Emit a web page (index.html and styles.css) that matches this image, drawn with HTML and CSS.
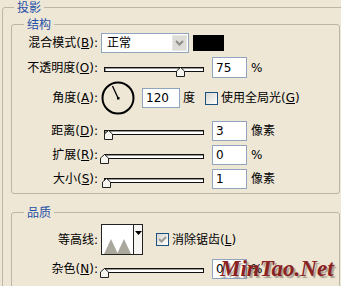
FILE: index.html
```html
<!DOCTYPE html>
<html lang="zh-CN">
<head>
    <meta charset="UTF-8">
    <title>投影</title>
    <link rel="stylesheet" href="styles.css">
</head>
<body>
    <fieldset class="group group-outer">
        <legend>投影</legend>

        <!-- 结构 -->
        <fieldset class="group group-inner">
            <legend>结构</legend>
            <div class="group-body">
                <div class="row row-tall">
                    <span class="label">混合模式(<u>B</u>):</span>
                    <div class="select">
                        <span class="select-text">正常</span>
                        <span class="select-btn">
                            <svg width="9" height="6" viewBox="0 0 9 6"><polyline points="1,1 4.5,4.5 8,1" fill="none" stroke="#8d8c88" stroke-width="2"/></svg>
                        </span>
                    </div>
                    <span class="swatch"></span>
                </div>

                <div class="row row-tall">
                    <span class="label">不透明度(<u>O</u>):</span>
                    <div class="slider">
                        <div class="track"></div>
                        <svg class="thumb" style="left:72px" width="9" height="10" viewBox="0 0 9 10"><polygon points="4.5,0.5 8.5,4 8.5,9.5 0.5,9.5 0.5,4"/></svg>
                    </div>
                    <input class="field" type="text" value="75">
                    <span class="unit">%</span>
                </div>

                <div class="row row-dial">
                    <span class="label">角度(<u>A</u>):</span>
                    <svg class="dial" width="34" height="34" viewBox="0 0 34 34">
                        <circle cx="17" cy="17" r="15.5" fill="none" stroke="#000" stroke-width="2"/>
                        <line x1="17" y1="17" x2="11.5" y2="5" stroke="#000" stroke-width="1.3"/>
                        <rect x="16" y="16" width="2.5" height="2.5" fill="#000"/>
                    </svg>
                    <input class="field field-angle" type="text" value="120">
                    <span class="unit unit-deg">度</span>
                    <span class="check"></span>
                    <span class="check-label">使用全局光(<u>G</u>)</span>
                </div>

                <div class="row">
                    <span class="label">距离(<u>D</u>):</span>
                    <div class="slider">
                        <div class="track"></div>
                        <svg class="thumb" style="left:0px" width="9" height="10" viewBox="0 0 9 10"><polygon points="4.5,0.5 8.5,4 8.5,9.5 0.5,9.5 0.5,4"/></svg>
                    </div>
                    <input class="field" type="text" value="3">
                    <span class="unit">像素</span>
                </div>

                <div class="row">
                    <span class="label">扩展(<u>R</u>):</span>
                    <div class="slider">
                        <div class="track"></div>
                        <svg class="thumb" style="left:-4px" width="9" height="10" viewBox="0 0 9 10"><polygon points="4.5,0.5 8.5,4 8.5,9.5 0.5,9.5 0.5,4"/></svg>
                    </div>
                    <input class="field" type="text" value="0">
                    <span class="unit">%</span>
                </div>

                <div class="row">
                    <span class="label">大小(<u>S</u>):</span>
                    <div class="slider">
                        <div class="track"></div>
                        <svg class="thumb" style="left:-2px" width="9" height="10" viewBox="0 0 9 10"><polygon points="4.5,0.5 8.5,4 8.5,9.5 0.5,9.5 0.5,4"/></svg>
                    </div>
                    <input class="field" type="text" value="1">
                    <span class="unit">像素</span>
                </div>
            </div>
        </fieldset>

        <!-- 品质 -->
        <fieldset class="group group-inner group-quality">
            <legend>品质</legend>
            <div class="group-body">
                <div class="row row-contour">
                    <span class="label">等高线:</span>
                    <div class="contour">
                        <svg class="contour-preview" width="31" height="29" viewBox="0 0 31 29">
                            <polygon points="2,29 9,14 16,29" fill="#aaa79d"/>
                            <polygon points="15,29 22,14 29,29" fill="#aaa79d"/>
                        </svg>
                        <span class="contour-btn">
                            <svg width="7" height="4" viewBox="0 0 7 4"><polygon points="0,0 7,0 3.5,4" fill="#000"/></svg>
                        </span>
                    </div>
                    <span class="check check-on">
                        <svg width="11" height="11" viewBox="0 0 11 11"><polyline points="2,5 4.5,7.5 9,3" fill="none" stroke="#9a9a96" stroke-width="2"/></svg>
                    </span>
                    <span class="check-label">消除锯齿(<u>L</u>)</span>
                </div>

                <div class="row">
                    <span class="label">杂色(<u>N</u>):</span>
                    <div class="slider">
                        <div class="track"></div>
                        <svg class="thumb" style="left:-4px" width="9" height="10" viewBox="0 0 9 10"><polygon points="4.5,0.5 8.5,4 8.5,9.5 0.5,9.5 0.5,4"/></svg>
                    </div>
                    <input class="field" type="text" value="0">
                    <span class="unit">%</span>
                </div>
            </div>
        </fieldset>
    </fieldset>

    <div class="watermark">MinTao.Net</div>
</body>
</html>
```

FILE: styles.css
```css
/* Basic reset */
* {
    box-sizing: border-box;
    margin: 0;
    padding: 0;
}

html,
body {
    overflow: hidden;
}

body {
    position: relative;
    height: 286px;
    background-color: #eee7d6;
    font-family: "DejaVu Sans", "Noto Sans CJK SC", sans-serif;
    font-size: 12px;
    color: #000;
}

/* Group boxes */
.group {
    border: 1px solid #bab6a8;
    border-radius: 3px;
}

.group legend {
    margin-left: 12px;
    padding: 0 3px;
    line-height: 14px;
    font-family: "Noto Sans CJK SC", sans-serif;
    color: #1f4fa8;
}

.group-outer {
    width: 400px;
    margin-left: 2px;
    padding-bottom: 40px;
}

.group-outer > legend {
    margin-left: 11px;
}

.group-inner {
    width: 329px;
    margin: 3px 0 0 8px;
}

.group-body {
    padding: 1px 0 4px;
}

.group-quality {
    margin-top: 11px;
}

.group-quality .group-body {
    padding: 5px 0 20px;
}

/* Rows */
.row {
    display: flex;
    align-items: center;
    height: 20px;
    margin-top: 4px;
    line-height: 14px;
}

.row:first-child {
    margin-top: 0;
}

.row-tall {
    height: 21px;
}

.row.row-dial {
    height: 34px;
    margin-top: 3px;
    margin-bottom: 6px;
}

.row.row-contour {
    height: 31px;
}

.label {
    width: 86px;
    text-align: right;
    white-space: nowrap;
}

/* Blend select */
.select {
    display: flex;
    align-items: center;
    width: 88px;
    height: 20px;
    margin-left: 3px;
    padding: 1px;
    border: 1px solid #8fa5bd;
    background-color: #fff;
}

.select-text {
    flex: 1;
    padding-left: 4px;
}

.select-btn {
    display: flex;
    align-items: center;
    justify-content: center;
    width: 15px;
    height: 16px;
    background-color: #dedcd6;
    border: 1px solid #e9e7e2;
}

.swatch {
    width: 31px;
    height: 16px;
    margin-left: 4px;
    background-color: #000;
}

/* Sliders */
.slider {
    position: relative;
    width: 100px;
    height: 20px;
    margin-left: 6px;
    padding-top: 9px;
}

.track {
    height: 5px;
    border: 1px solid #111;
    background-color: #fff;
    box-shadow: inset 1px 1px 0 #9a978e;
}

.thumb {
    position: absolute;
    top: 9px;
    fill: #f6f4ee;
    stroke: #222;
    stroke-width: 1;
}

/* Number fields */
.field {
    width: 35px;
    height: 21px;
    margin-left: 8px;
    padding: 0 3px;
    border: 1px solid #8fa5bd;
    background-color: #fff;
    font-family: "DejaVu Sans", sans-serif;
    font-size: 12px;
    color: #000;
    outline: none;
}

.row .field {
    height: 20px;
}

.row-tall .field {
    height: 21px;
}

.field-angle {
    width: 38px;
    margin-left: 7px;
}

.unit {
    margin-left: 4px;
}

.unit-deg {
    margin-left: 3px;
}

/* Dial */
.dial {
    margin-left: 3px;
}

/* Checkboxes */
.check {
    display: flex;
    align-items: center;
    justify-content: center;
    width: 13px;
    height: 13px;
    margin-left: 10px;
    border: 1px solid #1c5180;
    background: linear-gradient(135deg, #d8d6cf 0%, #f4f3ef 70%, #fff 100%);
}

.check-label {
    margin-left: 3px;
    white-space: nowrap;
}

.check-on {
    margin-left: 13px;
}

/* Contour picker */
.contour {
    display: flex;
    width: 42px;
    height: 31px;
    margin-left: 3px;
    border: 1px solid #222;
    background-color: #fff;
}

.contour-preview {
    display: block;
    width: 31px;
    height: 29px;
}

.contour-btn {
    display: flex;
    justify-content: center;
    width: 9px;
    padding-top: 6px;
    border-left: 1px solid #222;
    background-color: #f7f6f2;
}

/* Watermark over the noise row */
.watermark {
    position: absolute;
    left: 220px;
    top: 256px;
    font-family: "Liberation Serif", serif;
    font-size: 23px;
    font-style: italic;
    font-weight: bold;
    color: #8a2222;
    text-shadow: 2px 2px 1px rgba(80, 70, 60, 0.45);
}
```
